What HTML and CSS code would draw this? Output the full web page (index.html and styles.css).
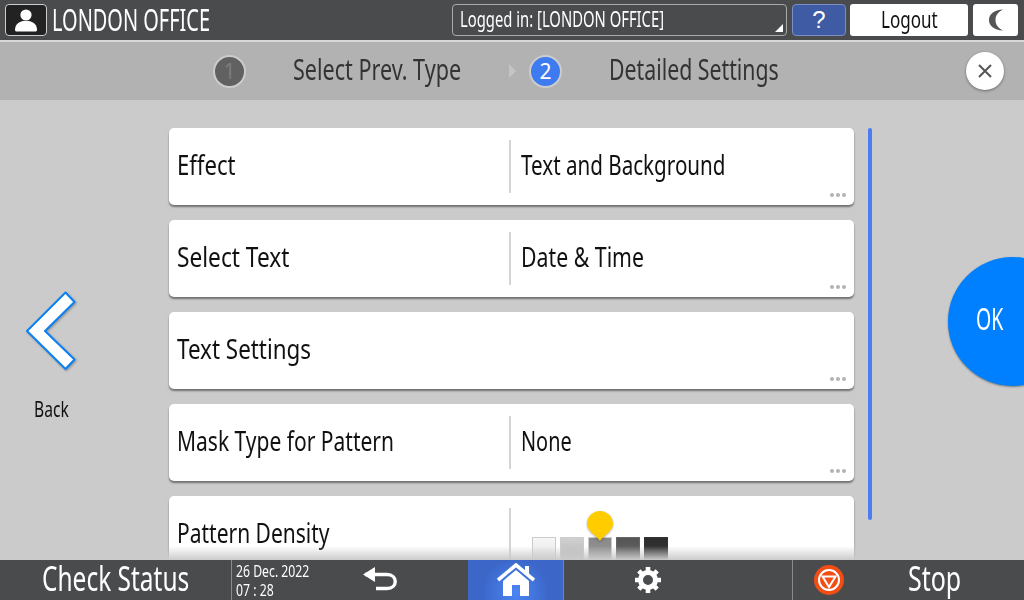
FILE: index.html
```html
<!DOCTYPE html>
<html lang="en">
<head>
<meta charset="utf-8">
<title>Detailed Settings</title>
<link rel="stylesheet" href="styles.css">
</head>
<body>
<div class="screen">
  <header class="topbar">
    <div class="user-btn"><svg width="26" height="24" viewBox="0 0 26 24"><circle cx="13" cy="7" r="5.6" fill="#fff"/><path d="M2 22c0-5 3-8 8-9h6c5 1 8 4 8 9 0 1-1 1.500-2 1.500H4c-1 0-2-.5-2-1.500z" fill="#fff"/></svg></div>
    <div class="office"><span class="n w67">LONDON OFFICE</span></div>
    <div class="login-box"><span class="n w70">Logged in: [LONDON OFFICE]</span><i class="corner"></i></div>
    <div class="help">?</div>
    <div class="logout"><span class="n w71">Logout</span></div>
    <div class="moon"><svg width="16" height="22" viewBox="0 0 16 22"><path d="M15 .5C6 1 1 5 1 11s5 10 14 10.500C10 19 7.500 15.500 7.500 11S10 3 15 .5z" fill="#555"/></svg></div>
  </header>
  <div class="stepbar">
    <div class="step-circle done">1</div>
    <div class="step-text"><span class="n w74">Select Prev. Type</span></div>
    <i class="step-arrow"></i>
    <div class="step-circle active">2</div>
    <div class="step-text"><span class="n w73">Detailed Settings</span></div>
    <div class="close"><svg width="14" height="14" viewBox="0 0 14 14"><path d="M1 1l12 12M13 1L1 13" stroke="#555" stroke-width="2" fill="none"/></svg></div>
  </div>
  <main class="content">
    <div class="back">
      <svg class="chevron" width="60" height="84" viewBox="0 0 60 84"><polygon points="3,41 41.500,2.500 50.500,12 21,41 50.500,69.500 41.500,79" fill="#fff" stroke="#0a80f5" stroke-width="2" stroke-linejoin="round"/></svg>
      <div class="back-label"><span class="n w71">Back</span></div>
    </div>
    <div class="list">
      <div class="card"><div class="label"><span class="n w79">Effect</span></div><div class="value"><span class="n w736">Text and Background</span></div><div class="dots"><b></b><b></b><b></b></div></div>
      <div class="card"><div class="label"><span class="n w81">Select Text</span></div><div class="value"><span class="n w76">Date &amp; Time</span></div><div class="dots"><b></b><b></b><b></b></div></div>
      <div class="card plain"><div class="label"><span class="n w80">Text Settings</span></div><div class="dots"><b></b><b></b><b></b></div></div>
      <div class="card"><div class="label"><span class="n w75">Mask Type for Pattern</span></div><div class="value"><span class="n w71">None</span></div><div class="dots"><b></b><b></b><b></b></div></div>
      <div class="card"><div class="label"><span class="n w75">Pattern Density</span></div>
        <div class="density">
          <div class="swatch s1"></div><div class="swatch s2"></div><div class="swatch s3"></div><div class="swatch s4"></div><div class="swatch s5"></div>
          <svg class="pin" width="28" height="32" viewBox="0 0 28 32"><path d="M14 31C10 25 1 21 1 14a13 13 0 0 1 26 0c0 7-9 11-13 17z" fill="#ffcc00"/></svg>
        </div>
      </div>
    </div>
    <div class="scrollbar"></div>
    <div class="fade"></div>
    <div class="ok"><span class="n w65">OK</span></div>
  </main>
  <footer class="bottombar">
    <div class="check"><span class="n w72">Check Status</span></div>
    <div class="datetime"><span class="n w72">26 Dec. 2022</span><span class="n w72">07 : 28</span></div>
    <div class="undo"><svg width="36" height="28" viewBox="0 0 36 28"><path d="M3 8.500h22c11 0 11 14 0 14H14" fill="none" stroke="#fff" stroke-width="3.400"/><path d="M13 1L1 8.500 13 16z" fill="#fff"/></svg></div>
    <div class="home"><svg width="38" height="34" viewBox="0 0 38 34"><path d="M1 17L19 2l18 15" fill="none" stroke="#fff" stroke-width="3.600"/><path d="M6 18v15h9V22h8v11h9V18L19 7z" fill="#fff"/><path d="M28 3h4v8l-4-3z" fill="#fff"/></svg></div>
    <div class="gear"><svg width="28" height="28" viewBox="0 0 28 28"><circle cx="14" cy="14" r="7.500" fill="none" stroke="#fff" stroke-width="5"/><path d="M14 1v26M1 14h26M4.800 4.800l18.400 18.400M23.200 4.800L4.800 23.200" stroke="#fff" stroke-width="4.600" stroke-dasharray="5 16"/></svg></div>
    <div class="stop"><svg class="stop-icon" width="30" height="30" viewBox="0 0 30 30"><circle cx="15" cy="15" r="15" fill="#f04e14"/><circle cx="15" cy="15" r="10" fill="none" stroke="#fff" stroke-width="2"/><path d="M8.500 11.500h13L15 22z" fill="none" stroke="#fff" stroke-width="2"/></svg><div class="stop-text"><span class="n w73">Stop</span></div></div>
  </footer>
</div>
</body>
</html>
```
FILE: styles.css
```css
* { box-sizing: border-box; }
html, body { margin: 0; padding: 0; }
body { width: 1024px; height: 600px; overflow: hidden; font-family: "Noto Sans", "Liberation Sans", sans-serif; }
.screen { width: 1024px; height: 600px; display: flex; flex-direction: column; background: #cbcbcb; }

/* the reference type is a condensed face: Noto Sans squeezed horizontally */
.n { display: inline-block; white-space: nowrap; transform-origin: 0 50%; }
.w65 { transform: scaleX(.65); }
.w67 { transform: scaleX(.665); }
.w70 { transform: scaleX(.705); }
.w71 { transform: scaleX(.71); }
.w72 { transform: scaleX(.72); }
.w73 { transform: scaleX(.734); }
.w736 { transform: scaleX(.736); }
.w74 { transform: scaleX(.743); }
.w75 { transform: scaleX(.75); }
.w76 { transform: scaleX(.76); }
.w79 { transform: scaleX(.79); }
.w80 { transform: scaleX(.80); }
.w81 { transform: scaleX(.81); }

.topbar { height: 42px; flex: none; background: #4a4b4d; border-bottom: 2px solid #d8d8d8; display: flex; align-items: flex-start; padding: 4px 6px 0 5px; color: #fff; }
.user-btn { width: 42px; height: 32px; background: #222; border: 1px solid #ccc; border-radius: 4px; display: flex; align-items: center; justify-content: center; }
.office { margin-left: 5px; font-size: 30px; line-height: 31px; width: 400px; }
.login-box { position: relative; width: 335px; height: 32px; border: 1px solid #aaa; border-radius: 4px; padding-left: 7px; font-size: 21px; line-height: 28px; }
.corner { position: absolute; right: 3px; bottom: 3px; border-left: 8px solid transparent; border-bottom: 8px solid #fff; }
.help { margin-left: 5px; width: 54px; height: 32px; background: #3e5ba3; border: 1px solid #7a8fc4; border-radius: 4px; text-align: center; font-size: 24px; line-height: 30px; font-family: "Liberation Sans", sans-serif; }
.logout { margin-left: 4px; width: 118px; height: 32px; background: #fff; color: #111; border-radius: 3px; padding-left: 31px; font-size: 24px; line-height: 29px; }
.moon { margin-left: 5px; width: 45px; height: 32px; background: #fff; border-radius: 3px; display: flex; align-items: center; justify-content: center; }

.stepbar { height: 58px; flex: none; background: #b2b2b2; display: flex; align-items: center; padding-left: 213px; color: #333; position: relative; }
.step-circle { width: 33px; height: 33px; border-radius: 50%; border: 2px solid #ccc; text-align: center; font-size: 21px; line-height: 28px; flex: none; }
.done { background: #616161; color: #7d7d7d; }
.active { background: #3f7bf0; color: #fff; }
.step-text { margin-left: 47px; font-size: 29px; line-height: 36px; width: 168px; margin-top: -4px; }
.step-arrow { margin-left: 48px; margin-right: 13px; border-left: 7px solid #c4c4c4; border-top: 7px solid transparent; border-bottom: 7px solid transparent; }
.close { position: absolute; left: 966px; top: 10px; width: 38px; height: 38px; border-radius: 50%; background: #fff; box-shadow: 0 1px 3px rgba(0,0,0,.4); display: flex; align-items: center; justify-content: center; }

.content { flex: 1; min-height: 0; position: relative; overflow: hidden; display: flex; align-items: flex-start; padding-top: 28px; }
.back { width: 169px; flex: none; padding: 162px 0 0 24px; }
.chevron { display: block; filter: drop-shadow(1px 1px 1px rgba(0,0,0,.3)); }
.back-label { margin-top: 20px; padding-left: 10px; font-size: 22px; line-height: 28px; color: #111; }
.list { width: 685px; flex: none; display: flex; flex-direction: column; gap: 15px; }
.card { position: relative; height: 77px; flex: none; background: #fff; border-radius: 5px; box-shadow: 0 2px 2px rgba(0,0,0,.45); display: grid; grid-template-columns: 334px 1fr; align-items: center; padding: 0 8px; color: #111; font-size: 28px; }
.label { height: 53px; line-height: 48px; border-right: 2px solid #d4d4d4; }
.plain .label { border-right: 0; }
.value { padding-left: 10px; height: 53px; line-height: 48px; }
.dots { position: absolute; right: 8px; bottom: 8px; display: flex; gap: 2px; }
.dots b { width: 4px; height: 4px; border-radius: 50%; background: #b3b3b3; }
.density { position: relative; display: flex; gap: 4px; padding: 41px 0 0 21px; height: 77px; align-self: start; }
.swatch { width: 24px; height: 24px; flex: none; border: 1px solid #ccc; }
.s1 { background: linear-gradient(#f6f6f6, #e6e6e6); }
.s2 { background: linear-gradient(#d0d0d0, #b8b8b8); }
.s3 { background: linear-gradient(#888, #9a9a9a); }
.s4 { background: linear-gradient(#555, #666); border-color: #666; }
.s5 { background: linear-gradient(#2c2c2c, #383838); border-color: #333; }
.pin { position: absolute; left: 75px; top: 14px; filter: drop-shadow(0 1px 1px rgba(0,0,0,.3)); }
.scrollbar { margin-left: 14px; width: 4px; height: 392px; border-radius: 2px; background: #4a7cf2; flex: none; }
.fade { position: absolute; left: 0; right: 0; bottom: 0; height: 14px; background: linear-gradient(rgba(203,203,203,0), #cbcbcb); }
.ok { position: absolute; left: 948px; top: 157px; width: 129px; height: 129px; border-radius: 50%; background: #0080ff; box-shadow: 0 1px 2px rgba(0,0,0,.4); color: #fff; font-size: 30px; line-height: 124px; padding-left: 28px; }

.bottombar { height: 40px; flex: none; background: #4a4b4d; color: #fff; display: flex; align-items: center; }
.check { width: 232px; height: 40px; padding-left: 42px; font-size: 34px; line-height: 36px; border-right: 1px solid #8a8a8a; }
.check .n { width: 190px; }
.datetime { width: 130px; padding-left: 4px; display: flex; flex-direction: column; font-size: 17px; line-height: 19px; }
.undo { width: 106px; padding-left: 0; display: flex; }
.home { width: 96px; height: 40px; background: radial-gradient(circle at 50% 80%, #4a86f5, #3c66c8 60%); display: flex; align-items: center; justify-content: center; border-right: 1px solid #5f86dd; }
.gear { width: 228px; padding-left: 70px; display: flex; }
.stop { flex: 1; height: 40px; border-left: 1px solid #8a8a8a; display: flex; align-items: center; padding-left: 21px; }
.stop-text { margin-left: 64px; margin-top: -4px; font-size: 34px; line-height: 36px; }
```
